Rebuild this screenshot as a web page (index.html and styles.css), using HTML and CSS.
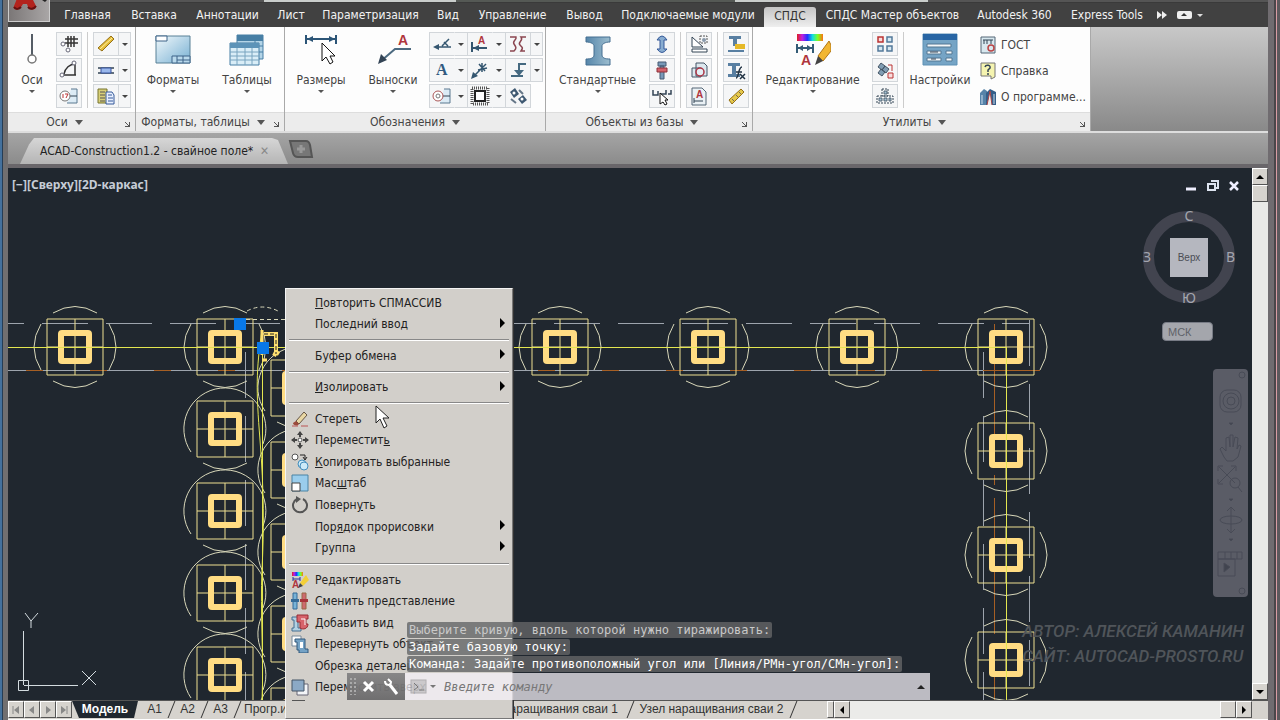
FILE: index.html
```
<!DOCTYPE html>
<html lang="ru">
<head>
    <meta charset="utf-8">
    <title>ACAD-Construction1.2 - свайное поле</title>
    <link rel="stylesheet" href="styles.css">
</head>
<body>
    <div class="app">
        <header class="titlebar">
            <span class="strip dark"></span>
            <span class="strip light"></span>
            <span class="strip mid"></span>
            <span class="strip light"></span>
        </header>

        <nav class="tabs">
            <button class="app-button" aria-label="Меню приложения">
                <svg width="42" height="21" viewBox="0 0 42 21"><path d="M5 6 9-4h13l5 10c1 4-6 5-8 1l-1-3h-4l-2 3c-2 4-9 3-7-1z" fill="#b3231d"/><path d="M5 7c2 3 5 2 7 0M19 7c2 3 6 2 8-1" stroke="#641010" stroke-width="2" fill="none"/><path d="M33 0h5l-2 2z" fill="#222"/></svg>
            </button>
            <a href="#">Главная</a>
            <a href="#">Вставка</a>
            <a href="#">Аннотации</a>
            <a href="#">Лист</a>
            <a href="#">Параметризация</a>
            <a href="#">Вид</a>
            <a href="#">Управление</a>
            <a href="#">Вывод</a>
            <a href="#">Подключаемые модули</a>
            <a href="#" class="active">СПДС</a>
            <a href="#">СПДС Мастер объектов</a>
            <a href="#">Autodesk 360</a>
            <a href="#">Express Tools</a>
            <svg class="tabs-more" width="50" height="12" viewBox="0 0 50 12"><path d="M4 2l5 4-5 4zM9 2l5 4-5 4z" fill="#eee"/><rect x="24" y="2" width="15" height="8" rx="2" fill="#eee"/><path d="M28 7l3-3 3 3z" fill="#333"/><path d="M44 5h6l-3 3z" fill="#ddd"/></svg>
        </nav>

        <section class="ribbon">
            <div class="panel p-axes">
                <div class="panel-body">
                    <button class="big">
                        <svg width="34" height="34"><path d="M17 2v22" stroke="#555d66" stroke-width="2"/><circle cx="17" cy="27" r="4" fill="#fff" stroke="#777" stroke-width="1.5"/></svg>
                        <span>Оси</span><i class="arrow"></i>
                    </button>
                    <div class="tools">
                        <button class="tool"><svg width="20" height="20"><path d="M6 5h13M6 9h13M9 2v11M12 2v11M15 2v11" stroke="#333" stroke-width="1.5"/><circle cx="4" cy="10" r="2" fill="#fff" stroke="#667"/><circle cx="9" cy="16" r="2" fill="#fff" stroke="#667"/></svg></button>
                        <button class="tool"><svg width="20" height="20"><path d="M4 15h13M16 4v11M5 14C6 8 11 4 16 4" stroke="#333" stroke-width="1.5" fill="none"/><circle cx="3" cy="15" r="2" fill="#fff" stroke="#667"/><circle cx="15" cy="3" r="2" fill="#fff" stroke="#667"/></svg></button>
                        <button class="tool"><svg width="20" height="20"><path d="M12 3h6v14H8" fill="#dcebf5" stroke="#5b7890"/><path d="M10 10h8" stroke="#345"/><circle cx="6" cy="10" r="5" fill="#fff" stroke="#777"/><path d="M4 8v4M6 8h3l-2 4" stroke="#b33" fill="none"/></svg></button>
                    </div>
                    <span class="divider"></span>
                    <div class="tools">
                        <div class="split"><button class="tool"><svg width="20" height="20"><path d="M2 14 15 2l3 3L6 17z" fill="#e5bd3b" stroke="#957017"/><path d="M4 15 16 4" stroke="#fff3a3"/></svg></button><button class="drop"></button></div>
                        <div class="split"><button class="tool"><svg width="20" height="20"><path d="M2 8h16M2 13h16" stroke="#345" stroke-width="1.5"/><path d="M5 8h10v5H5z" fill="#9ab8ec" stroke="#3955a0"/></svg></button><button class="drop"></button></div>
                        <div class="split"><button class="tool"><svg width="20" height="20"><path d="M2 3h9v14H2z" fill="#d9d078" stroke="#77742e"/><path d="M4 6h5M4 9h5M4 12h5M4 15h5" stroke="#555"/><path d="M10 6h6l2 3v9h-8z" fill="#e8f0ff" stroke="#345999"/><path d="M12 9h4M12 12h5M12 15h5" stroke="#345999"/></svg></button><button class="drop"></button></div>
                    </div>
                </div>
                <footer><span>Оси</span><i class="arrow wide"></i><i class="launcher"></i></footer>
            </div>

            <div class="panel p-formats">
                <div class="panel-body">
                    <button class="big">
                        <svg width="36" height="34"><defs><linearGradient id="sheet" x2="1" y2="1"><stop stop-color="#f1f8fb"/><stop offset="1" stop-color="#77b0d3"/></linearGradient></defs><path d="M1 4h34v27H1z" fill="url(#sheet)" stroke="#588096"/><path d="M1 4h11v5H1z" fill="#fff" stroke="#3c6388"/><path d="M17 24h18v7H17zM22 24v7M28 24v7M22 28h13" fill="#b9d9ec" stroke="#3c6388"/></svg>
                        <span>Форматы</span><i class="arrow"></i>
                    </button>
                    <button class="big">
                        <svg width="36" height="34"><path d="M8 3h26v24H8z" fill="#b3d4e7" stroke="#477fa5"/><path d="M8 3h26v6H8z" fill="#477fa5"/><path d="M8 14h26M8 20h26M26 9v18" stroke="#477fa5"/><path d="M1 11h29v22H1z" fill="#d9edf7" stroke="#477fa5"/><path d="M1 11h29v5H1z" fill="#5c93b8"/><path d="M1 20h29M1 24h29M1 28h29M8 16v17M16 16v17M23 16v17" stroke="#79a4bf"/></svg>
                        <span>Таблицы</span><i class="arrow"></i>
                    </button>
                </div>
                <footer><span>Форматы, таблицы</span><i class="arrow wide"></i><i class="launcher"></i></footer>
            </div>

            <div class="panel p-marks">
                <div class="panel-body">
                    <button class="big">
                        <svg width="36" height="34"><path d="M3 3v9M33 3v9M3 7h30" stroke="#2c5577" stroke-width="2"/><path d="M4 7l6-3v6zM32 7l-6-3v6z" fill="#2c5577"/><path d="M19 11v18l4-4 4 7 3-2-3-6h5z" fill="#fff" stroke="#111"/></svg>
                        <span>Размеры</span><i class="arrow"></i>
                    </button>
                    <button class="big">
                        <svg width="36" height="34"><text x="23" y="13" class="glyph red">A</text><path d="M36 17H20L6 29" stroke="#4c6a80" stroke-width="2" fill="none"/><path d="M3 32l3-10 6 6z" fill="#345"/></svg>
                        <span>Выноски</span><i class="arrow"></i>
                    </button>
                    <div class="tools">
                        <div class="split plain"><button class="tool"><svg width="20" height="20"><path d="M4 13h15M10 12l7-7M12 8l4 4" stroke="#345670" stroke-width="1.5"/><path d="M1 13l6-3v6z" fill="#345670"/></svg></button><button class="drop"></button></div>
                        <div class="split plain"><button class="tool"><svg width="20" height="20"><text x="5" y="12" class="glyph-sm blue">A</text></svg></button><button class="drop"></button></div>
                        <div class="split plain"><button class="tool"><svg width="20" height="20"><path d="M12 3h6v14H8" fill="#dcebf5" stroke="#5b7890"/><path d="M10 10h8" stroke="#345"/><circle cx="6" cy="10" r="5" fill="#fff" stroke="#a55"/><circle cx="6" cy="10" r="2" fill="none" stroke="#777"/></svg></button><button class="drop"></button></div>
                    </div>
                    <div class="tools">
                        <div class="split plain"><button class="tool"><svg width="20" height="20"><path d="M2 8v10M3 14h14" stroke="#345670" stroke-width="2"/><path d="M3 14l6-3v6z" fill="#345670"/><text x="8" y="10" class="glyph-xs red">A</text></svg></button><button class="drop"></button></div>
                        <div class="split plain"><button class="tool"><svg width="20" height="20"><path d="M3 17 16 4M9 4l6 7M8 10l9-2M12 3v9" stroke="#345670" stroke-width="1.5"/><path d="M1 19l2-7 5 4z" fill="#345670"/></svg></button><button class="drop"></button></div>
                        <div class="split plain"><button class="tool"><svg width="20" height="20"><path d="M2 2h16v16H2z" fill="none" stroke="#555" stroke-width="3" stroke-dasharray="1 1"/><path d="M5 5h10v10H5z" fill="#fff" stroke="#222" stroke-width="2"/></svg></button><button class="drop"></button></div>
                    </div>
                    <div class="tools">
                        <div class="split"><button class="tool"><svg width="20" height="20"><path d="M2 3h6c1 3-4 4-2 7s3 4 0 7H2M18 3h-5c3 4-4 5-1 8s3 3 1 6h4" stroke="#8b4650" stroke-width="1.5" fill="none"/></svg></button><button class="drop"></button></div>
                        <div class="split"><button class="tool"><svg width="20" height="20"><path d="M18 4h-7v12M3 16h12" stroke="#456980" stroke-width="2" fill="none"/><path d="M6 10h10l-5 6z" fill="#456980"/></svg></button><button class="drop"></button></div>
                        <button class="tool"><svg width="20" height="20"><path d="M2 6l5-4 4 6-5 4zM10 13l5-4 4 5-5 4z" fill="#3e5871"/><circle cx="6" cy="7" r="1.5" fill="#fff"/><circle cx="14" cy="13" r="1.5" fill="#fff"/><path d="M11 4l4 4M3 13l5 4" stroke="#678" stroke-width="2"/></svg></button>
                    </div>
                </div>
                <footer><span>Обозначения</span><i class="arrow wide"></i></footer>
            </div>

            <div class="panel p-objects">
                <div class="panel-body">
                    <button class="big">
                        <svg width="36" height="34"><defs><linearGradient id="steel"><stop stop-color="#5686aa"/><stop offset="1" stop-color="#9cbdcf"/></linearGradient></defs><path d="M6 5h24v5c-5 0-8 2-8 4v9c0 3 3 4 8 4v6H6v-6c5 0 8-1 8-4v-9c0-2-3-4-8-4z" fill="url(#steel)" stroke="#456f91"/></svg>
                        <span>Стандартные</span><i class="arrow"></i>
                    </button>
                    <div class="tools">
                        <button class="tool"><svg width="20" height="20"><path d="M5 6q5-8 10 0h-3v9h3q-5 7-10 0h3V6z" fill="#88acd0" stroke="#345999"/></svg></button>
                        <button class="tool"><svg width="20" height="20"><path d="M6 2h8v4H6zM8 6h4v13H8z" fill="#7899b8" stroke="#475b73"/><path d="M5 8h10v4H5z" fill="#d4636c" stroke="#8c3038"/></svg></button>
                        <button class="tool"><svg width="20" height="20"><path d="M1 4v5h5V5M8 8h6V4M16 8h3V4" stroke="#345" stroke-width="1.5" fill="none"/><path d="M8 7v11l3-2 2 3 2-1-2-4h3z" fill="#fff" stroke="#111"/></svg></button>
                    </div>
                    <span class="divider"></span>
                    <div class="tools">
                        <button class="tool"><svg width="20" height="20"><path d="M3 3l11 10H3zM3 15h15v3H3z" fill="#fff" stroke="#345"/><path d="M11 2h7v7h-7z" fill="none" stroke="#555" stroke-dasharray="2 1"/><circle cx="15" cy="6" r="2" fill="#89a"/></svg></button>
                        <button class="tool"><svg width="20" height="20"><path d="M3 8h9v9H3zM7 3h8l3 3v10H7z" fill="#dce8ef" stroke="#456"/><circle cx="11" cy="12" r="4" fill="#e4eef4" stroke="#a34" stroke-width="1.5"/></svg></button>
                        <button class="tool"><svg width="20" height="20"><path d="M3 2h10l4 4v13H3z" fill="#eaf1f5" stroke="#567"/><path d="M5 15h9M5 12v5" stroke="#345"/><text x="7" y="12" class="glyph-xs red">A</text></svg></button>
                    </div>
                    <span class="divider"></span>
                    <div class="tools">
                        <button class="tool"><svg width="20" height="20"><path d="M3 2h12v3h-4v7H7V5H3z" fill="#587fa2"/><path d="M9 10h10v5H9z" fill="#e5b928"/><path d="M2 16h16v2H2z" fill="#587fa2"/></svg></button>
                        <button class="tool"><svg width="20" height="20"><path d="M2 3h12v3h-4v8h4v3H2v-3h4V6H2z" fill="#587fa2"/><path d="M16 7c-4 0-3 11-6 11M10 12h6M14 14l5 5M19 14l-5 5" stroke="#234" stroke-width="1.5" fill="none"/></svg></button>
                        <button class="tool"><svg width="20" height="20"><path d="M3 14 15 3l3 3L6 18z" fill="#e5c94b" stroke="#957017"/><path d="M6 13l2 2M10 9l2 2M13 6l2 2" stroke="#765"/></svg></button>
                    </div>
                </div>
                <footer><span>Объекты из базы</span><i class="arrow wide"></i><i class="launcher"></i></footer>
            </div>

            <div class="panel p-utils">
                <div class="panel-body">
                    <button class="big">
                        <svg width="36" height="34"><defs><linearGradient id="rainbow"><stop stop-color="#e02020"/><stop offset=".2" stop-color="#c020e0"/><stop offset=".4" stop-color="#2030ff"/><stop offset=".6" stop-color="#10e0e0"/><stop offset=".8" stop-color="#80ff20"/><stop offset="1" stop-color="#ff7010"/></linearGradient></defs><path d="M2 2h26v7H2z" fill="url(#rainbow)"/><path d="M2 12v9M18 12v9M3 16h15" stroke="#345c76" stroke-width="2"/><path d="M3 16l5-3v6zM17 16l-5-3v6z" fill="#345c76"/><text x="6" y="33" class="glyph red">A</text><path d="M23 24 34 9l2 4v6l-8 10z" fill="#f2b632" stroke="#b27615"/><path d="M23 24l5 5-8 4z" fill="#444"/></svg>
                        <span>Редактирование</span><i class="arrow"></i>
                    </button>
                    <div class="tools">
                        <button class="tool"><svg width="20" height="20"><path d="M3 3h5v5H3z" fill="#f7dddd" stroke="#b33" stroke-width="1.5"/><path d="M12 3h5v5h-5zM3 12h5v5H3zM12 12h5v5h-5z" fill="#d7e8f2" stroke="#53799a" stroke-width="1.5"/></svg></button>
                        <button class="tool"><svg width="20" height="20"><path d="M6 3l4 3-3 4-4-3zM10 6l4 3-3 4-4-3zM6 9l4 3-3 4-4-3z" fill="#809db3" stroke="#456"/><path d="M13 5h4v6" stroke="#b33" fill="none"/><path d="M13 13h5v5h-5z" fill="#f7dddd" stroke="#b33"/></svg></button>
                        <button class="tool"><svg width="20" height="20"><path d="M2 10h16v7H2zM7 3h6v7H7z" fill="none" stroke="#345" stroke-dasharray="2 1"/><path d="M4 12h3v3H4zM9 12h3v3H9zM14 12h2v3h-2zM9 5h3v3H9z" fill="#a4c1d2" stroke="#567"/></svg></button>
                    </div>
                    <span class="divider"></span>
                    <button class="big settings">
                        <svg width="36" height="34"><path d="M1 2h34v31H1z" fill="#75a4c5" stroke="#5f91b4"/><path d="M1 2h34v6H1z" fill="#2865a4"/><path d="M5 12h24v3H5zM5 19h14v3H5zM24 19h6v3h-6zM5 26h14v3H5zM24 26h6v3h-6z" fill="#f4f7f8" stroke="#527792"/><path d="M8 20h8M9 27h5" stroke="#345"/></svg>
                        <span>Настройки</span>
                    </button>
                    <div class="links">
                        <button><svg width="18" height="18"><path d="M2 1h14v16H2z" fill="#d8e8ef" stroke="#567"/><path d="M4 4h10M5 4v4M8 4v4M12 4v4" stroke="#345"/><circle cx="12" cy="12" r="3" fill="none" stroke="#b44" stroke-width="1.5"/></svg>ГОСТ</button>
                        <button><svg width="18" height="18"><path d="M2 1h14v14l-4 2v-3H2z" fill="#f5f4b0" stroke="#777"/><path d="M6 5c1-3 6-2 5 1l-2 2v2M9 11v2" stroke="#345" stroke-width="1.5" fill="none"/></svg>Справка</button>
                        <button><svg width="18" height="18"><path d="M1 5l4-4 3 2v14H1z" fill="#5683a9"/><path d="M7 5l4-4 6 3v13H7z" fill="#345e89"/><path d="M8 17l3-14 2 14" fill="#eee" stroke="#a44"/><path d="M3 7v9M15 6v10" stroke="#cde"/></svg>О программе...</button>
                    </div>
                </div>
                <footer><span>Утилиты</span><i class="arrow wide"></i><i class="launcher"></i></footer>
            </div>
        </section>

        <div class="doc-tabs">
            <div class="doc-tab"><span>ACAD-Construction1.2 - свайное поле*</span><button aria-label="Закрыть">✕</button></div>
            <button class="new-tab" aria-label="Новая вкладка"><svg width="26" height="20" viewBox="0 0 26 20"><path d="M2 2h16q3 0 4 4l2 12H10q-4 0-5-4z" fill="#777" stroke="#555" stroke-width="2"/><path d="M13 6v8M9 10h8" stroke="#999" stroke-width="3"/></svg></button>
        </div>

        <main class="workspace">
            <div class="canvas">
                <svg class="drawing" width="100%" height="100%">
                    <defs>
                        <g id="core">
                            <path d="M-28-28h56v56h-56zM0-28v56M-28 0h56" fill="none" stroke="#eee092"/>
                            <rect x="-14" y="-14" width="28" height="28" rx="1" fill="none" stroke="#ffdc83" stroke-width="6"/>
                        </g>
                        <g id="pile">
                            <use href="#core"/>
                            <path class="arc" d="M-22-34Q0-47 22-34M-22 34Q0 47 22 34M-34-23Q-48 0-34 23M34-23Q48 0 34 23"/>
                        </g>
                        <g id="chain">
                            <use href="#core"/>
                            <path class="arc" d="M-34 23A41 41 0 1 1 38 15M-22 34Q0 47 22 34"/>
                        </g>
                    </defs>
                    <!-- origin of the drawing is the window corner -->
                    <g transform="translate(-8 -168)">
                        <g class="guides">
                            <path d="M-22 323.500H1030" stroke-dasharray="46 18"/>
                            <path d="M8 370.500H983"/>
                            <path class="orange" d="M26 370.500H983" stroke-dasharray="17 47"/>
                            <path d="M983.500 352V700M245.500 352V700" stroke-dasharray="46 18"/>
                            <path d="M1029.500 320V700" stroke-dasharray="46 18"/>
                            <path class="orange" d="M983 370.500h57M994.500 324V700" stroke-dasharray="136 15 10 13"/>
                        </g>
                        <use href="#pile" x="75" y="347"/>
                        <use href="#pile" x="225" y="347"/>
                        <use href="#pile" x="560" y="347"/>
                        <use href="#pile" x="708" y="347"/>
                        <use href="#pile" x="857" y="347"/>
                        <use href="#pile" x="1006" y="347"/>
                        <use href="#pile" x="1006" y="451"/>
                        <use href="#pile" x="1006" y="555"/>
                        <use href="#pile" x="1006" y="660"/>
                        <use href="#chain" x="225" y="429"/>
                        <use href="#chain" x="225" y="511"/>
                        <use href="#chain" x="225" y="593"/>
                        <use href="#chain" x="225" y="675"/>
                        <use href="#chain" x="299" y="388"/>
                        <use href="#chain" x="299" y="470"/>
                        <use href="#chain" x="299" y="552"/>
                        <use href="#chain" x="299" y="634"/>
                        <use href="#chain" x="299" y="716"/>
                        <path class="axis" d="M8 347.500H1006M1006.500 347V700M262.500 347V700"/>
                        <path class="axis" d="M262 330c-6 40-6 60-2 110s4 90 2 130 2 90 0 130"/>
                        <path d="M247 311q15-8 31 0M246 319.500h40" class="arc" stroke-dasharray="4 3"/>
                        <path d="M264 334h12v18l3 2-3-2-2 4" stroke="#ffe070" stroke-width="4" fill="none"/>
                        <path d="M264 334h12v20" stroke="#222" fill="none" stroke-dasharray="4 2"/>
                        <path d="M262 360h5M262 330v25" stroke="#ffe070" stroke-width="3"/>
                        <path d="M234 318h12v12h-12zM257 342h12v12h-12z" fill="#0878e8"/>
                        <g class="ucs">
                            <path d="M23.500 631v54M24 685.500h54M18.500 680.500h10v10h-10zM25 613l6 8 7-8M31 621v7M82 671l14 14M96 671l-14 14"/>
                        </g>
                    </g>
                </svg>

                <div class="view-label">[−][Сверху][2D-каркас]</div>
                <div class="watermark"><p>АВТОР: АЛЕКСЕЙ КАМАНИН</p><p>САЙТ: AUTOCAD-PROSTO.RU</p></div>

                <div class="window-buttons">
                    <svg width="56" height="12"><path d="M1 9h10" stroke="#eef" stroke-width="3"/><path d="M26 1h7v7h-3M23 4h7v6h-7z" fill="none" stroke="#dde4f0" stroke-width="2"/><path d="M45 2l8 8M53 2l-8 8" stroke="#eef" stroke-width="2.500"/></svg>
                </div>

                <div class="viewcube">
                    <span class="north">С</span><span class="west">З</span>
                    <button>Верх</button>
                    <span class="east">В</span><span class="south">Ю</span>
                </div>
                <button class="ucs-name">МСК</button>

                <div class="navbar">
                    <svg width="35" height="228" fill="none" stroke="#484b56">
                        <circle cx="29" cy="6" r="3"/><circle cx="29" cy="222" r="3"/>
                        <rect x="7" y="21" width="21" height="22" rx="7"/><circle cx="18" cy="32" r="8"/><circle cx="18" cy="32" r="4"/>
                        <path d="M16 54h4l-2 2zM16 130h4l-2 2zM16 170h4l-2 2z" fill="#41444f"/>
                        <path d="M11 88 7 80l2-2 4 4V69l3-1 1 10V66h3v12l2-10 3 1-1 11 2-4 2 1-3 11-5 4h-6z"/>
                        <path d="M6 98l16 16M22 98 6 114M5 102v-5h5M18 97h5v5M5 110v5h5"/><circle cx="22" cy="114" r="5"/><path d="M25 118l4 5"/>
                        <path d="M18 138v26M14 142l4-4 4 4M14 160l4 4 4-4"/><ellipse cx="18" cy="151" rx="11" ry="4"/>
                        <path d="M5 183h24v7H5zM5 190h17v17H5zM12 183v7M18 183v7M24 183v7"/><path d="M11 194v9l6-5z" fill="#41444f"/>
                    </svg>
                </div>
            </div>
            <div class="vscroll">
                <button class="sb up" aria-label="Вверх"></button>
                <span class="thumb"></span>
                <button class="sb down" aria-label="Вниз"></button>
            </div>
        </main>

        <footer class="layouts">
            <button class="nav-btn" aria-label="Первый"><svg width="10" height="10"><path d="M2 1v8" stroke="#888"/><path d="M8 1v8L3 5z" fill="#888"/></svg></button>
            <button class="nav-btn" aria-label="Назад"><svg width="10" height="10"><path d="M7 1v8L2 5z" fill="#888"/></svg></button>
            <button class="nav-btn" aria-label="Вперёд"><svg width="10" height="10"><path d="M3 1v8l5-4z" fill="#888"/></svg></button>
            <button class="nav-btn" aria-label="Последний"><svg width="10" height="10"><path d="M2 1v8l5-4z" fill="#888"/><path d="M8 1v8" stroke="#888"/></svg></button>
            <div class="layout-tabs">
                <a href="#" class="current">Модель</a>
                <a href="#">А1</a>
                <a href="#">А2</a>
                <a href="#">А3</a>
                <a href="#" class="program">Прогр.и</a>
                <a href="#" class="joint">Узел наращивания сваи 1</a>
                <a href="#" class="joint">Узел наращивания сваи 2</a>
            </div>
            <span class="grip"></span>
            <button class="sb left" aria-label="Влево"></button>
            <div class="htrack"><span class="thumb"></span></div>
            <button class="sb right" aria-label="Вправо"></button>
            <span class="corner"></span>
        </footer>

        <div class="menu" role="menu">
            <div class="menu-list">
                <button><span><u>П</u>овторить СПМАССИВ</span></button>
                <button class="sub"><span>Последний ввод</span></button>
                <hr>
                <button class="sub"><span>Буфер обмена</span></button>
                <hr>
                <button class="sub"><span><u>И</u>золировать</span></button>
                <hr>
                <button><svg width="18" height="18"><path d="M5 11l8-9 3 3-8 9z" fill="#e8d6a3" stroke="#654"/><path d="M5 11l3 3c-2 3-6 1-6-1z" fill="#9b4b3c"/><path d="M1 16h6M10 16h7" stroke="#b55"/></svg><span>Стереть</span></button>
                <button><svg width="18" height="18"><path d="M9 1v5M9 12v5M1 9h5M12 9h5" stroke="#444" stroke-width="2"/><path d="M6 4l3-4 3 4zM6 14l3 4 3-4zM4 6L0 9l4 3zM14 6l4 3-4 3z" fill="#444"/><circle cx="9" cy="9" r="2" fill="#fff" stroke="#555"/></svg><span>Переместит<u>ь</u></span></button>
                <button><svg width="18" height="18"><circle cx="4" cy="4" r="3" fill="#fff" stroke="#555"/><path d="M9 2h5v4M12 4l2 3 2-3" stroke="#222" fill="none"/><circle cx="11" cy="11" r="4" fill="#cceaf8" stroke="#438dbc"/><circle cx="13" cy="13" r="4" fill="#cceaf8" stroke="#438dbc"/></svg><span><u>К</u>опировать выбранные</span></button>
                <button><svg width="18" height="18"><path d="M1 1h16v16H1z" fill="#9acdec" stroke="#4b83a4"/><path d="M1 9h8v8H1z" fill="#fff" stroke="#444"/></svg><span>Мас<u>ш</u>таб</span></button>
                <button><svg width="18" height="18"><path d="M6 3a7 7 0 1 0 6 0" fill="none" stroke="#555" stroke-width="2"/><path d="M5 0l5 3-5 4z" fill="#555"/></svg><span>Поверн<u>у</u>ть</span></button>
                <button class="sub"><span>Пор<u>я</u>док прорисовки</span></button>
                <button class="sub"><span>Группа</span></button>
                <hr>
                <button><svg width="18" height="18"><path d="M1 1h11v4H1z" fill="url(#rainbow)"/><path d="M2 8h7M2 6v4M9 6v4" stroke="#239"/><text x="1" y="17" class="glyph-xs red">A</text><path d="M9 12l6-8 3 5-6 6z" fill="#f3cf38"/><path d="M9 12l3 3-5 2z" fill="#444"/></svg><span>Редактировать</span></button>
                <button><svg width="18" height="18"><path d="M2 1h4v16H2z" fill="#79b3d7" stroke="#356b98"/><path d="M11 1h4v16h-4z" fill="#cd6a70" stroke="#964"/><path d="M0 7h8v3H0z" fill="#356b98"/><path d="M9 7h8v3H9z" fill="#a8343c"/></svg><span>Сменить представление</span></button>
                <button><svg width="18" height="18"><path d="M1 3h9v3H7v8h3v3H1v-3h2V6H1z" fill="#b3d1e3" stroke="#456f91"/><path d="M6 1h11v4h-2v5h2c0 5-5 6-8 4V8H6z" fill="#d6636b" stroke="#982c34"/><path d="M10 5h4v6" stroke="#fff" fill="none"/></svg><span>Добавить вид</span></button>
                <button><svg width="18" height="18"><path d="M1 1h9v4H8v6H1z" fill="#fff" stroke="#789"/><path d="M4 4h10v10h3v4H8v-3H6V7H4z" fill="#74a2c5" stroke="#31587c"/><path d="M9 7h3v6H9z" fill="#fff"/></svg><span>Перевернуть объект</span></button>
                <button><span>Обрезка деталей</span></button>
                <button><svg width="18" height="18"><path d="M6 6h11v11H6z" fill="#f3f5f8" stroke="#667"/><path d="M1 2h12v11H1z" fill="#8ba9c6" stroke="#456"/></svg><span>Переместить вверх</span></button>
            </div>
            <span class="next-icon"></span>
        </div>

        <svg class="pointer" width="16" height="26"><path d="M1 1v17l4-4 4 9 3-2-4-8h6z" fill="#fff" stroke="#222"/></svg>

        <div class="command">
            <p class="old">Выберите кривую, вдоль которой нужно тиражировать:</p>
            <p>Задайте базовую точку:</p>
            <p>Команда: Задайте противоположный угол или [Линия/РМн-угол/СМн-угол]:</p>
            <div class="command-line">
                <div class="handles"><svg width="58" height="26"><path d="M4 5v17M8 5v17" stroke="#aaa" stroke-width="2" stroke-dasharray="2 2"/><path d="M17 9l9 9M26 9l-9 9" stroke="#fff" stroke-width="3"/><path d="M43 12l7 9" stroke="#fff" stroke-width="3"/><path d="M38 8c0 5 6 5 6 1l-3-3" stroke="#fff" stroke-width="2" fill="none"/></svg></div>
                <svg class="prompt" width="30" height="16"><rect x="5" y="1" width="15" height="13" fill="#aaa" opacity=".5" stroke="#777"/><path d="M8 4l4 4-4 3M13 11h5" stroke="#777" fill="none"/><path d="M24 6h6l-3 3z" fill="#777"/></svg>
                <input type="text" placeholder="Введите команду" aria-label="Команда">
                <i class="history-arrow"></i>
            </div>
        </div>
    </div>
</body>
</html>
```
FILE: styles.css
```
* {
    box-sizing: border-box;
}

body {
    margin: 0;
    background: #69656a;
    font-family: "DejaVu Sans Condensed", "DejaVu Sans", sans-serif;
    font-size: 12px;
    color: #333;
}

button {
    margin: 0;
    padding: 0;
    border: 0;
    background: none;
    font: inherit;
    color: inherit;
}

a {
    color: inherit;
    text-decoration: none;
}

p {
    margin: 0;
}

svg {
    display: block;
    flex: none;
}

.app {
    position: relative;
    display: flex;
    flex-direction: column;
    height: 100vh;
    min-height: 600px;
    overflow: hidden;
    padding: 0 12px 0 8px;
    background: linear-gradient(90deg, #44719d 2px, #263d55 2px, #263d55 3px, #716f70 3px, #716f70 8px, transparent 8px),
        linear-gradient(270deg, #5d595d 3px, #d99da4 3px, #d99da4 4px, #4a464a 4px, #4a464a 6px, #706c70 6px);
}

/* title strip and tabs */

.titlebar {
    display: grid;
    grid-template-columns: 256px 192px 279px 193px 1fr;
    height: 3px;
    background: #555;
    border-bottom: 1px solid #3a3a3a;
}

.strip.light {
    background: #c9cdcb;
}

.strip.mid {
    background: #555955;
}

.tabs {
    position: relative;
    display: grid;
    grid-template-columns: 46px 67px 66px 81px 46px 113px 42px 87px 57px 150px 54px 151px 93px 92px 1fr;
    align-items: center;
    height: 24px;
    background: #414141;
    color: #f2f2f2;
    text-align: center;
    white-space: nowrap;
}

.tabs a {
    line-height: 24px;
}

.tabs a.active {
    align-self: end;
    margin: 0 1px;
    height: 20px;
    line-height: 18px;
    border-radius: 3px 3px 0 0;
    background: linear-gradient(#c4c4c4, #eee);
    color: #333;
}

.app-button {
    position: absolute;
    left: 0;
    top: -3px;
    width: 42px;
    height: 22px;
    background: linear-gradient(90deg, #7b7777, #a9a6a6);
    border: 1px solid #ccc;
    border-top: 0;
    overflow: hidden;
}

.tabs a:nth-of-type(1) {
    grid-column: 2;
}

/* ribbon */

.ribbon {
    display: flex;
    height: 106px;
    background: linear-gradient(#c8c8c8, #898989);
    border-bottom: 2px solid #ddd;
}

.panel {
    flex: none;
    display: flex;
    flex-direction: column;
    border-right: 1px solid #a9a9a9;
    background: #fdfdfd;
}

.p-axes { width: 128px; }
.p-formats { width: 149px; }
.p-marks { width: 261px; }
.p-objects { width: 207px; }
.p-utils { width: 338px; }

.panel-body {
    display: flex;
    flex: 1;
    padding-top: 5px;
}

.panel footer {
    position: relative;
    display: flex;
    align-items: center;
    justify-content: center;
    gap: 7px;
    height: 19px;
    border-top: 1px solid #ddd;
    background: #ececec;
    color: #444;
}

.p-axes footer,
.p-formats footer,
.p-objects footer,
.p-utils footer {
    padding-right: 14px;
}

.arrow {
    border: 3px solid transparent;
    border-top-color: #555;
    border-bottom: 0;
}

.arrow.wide {
    border-width: 5px 4px 0;
}

.launcher {
    position: absolute;
    right: 5px;
    bottom: 4px;
    width: 5px;
    height: 5px;
    border: solid #555;
    border-width: 0 1px 1px 0;
    background: linear-gradient(to top right, transparent 40%, #555 40%, #555 60%, transparent 60%);
}

.big {
    display: flex;
    flex-direction: column;
    align-items: center;
    width: 72px;
    white-space: nowrap;
    color: #444;
}

.big span {
    margin-top: 6px;
    line-height: 16px;
}

.big .arrow {
    margin-top: 2px;
}

.p-axes .big { width: 48px; }
.p-formats .big { width: 74px; }
.p-marks .big { width: 72px; }
.p-objects .big { width: 103px; }
.p-utils .big { width: 119px; }
.p-utils .settings { width: 72px; }

.tools {
    display: grid;
    grid-template-rows: repeat(3, 24px);
    align-content: start;
    gap: 2px;
}

.tool {
    display: flex;
    align-items: center;
    justify-content: center;
    width: 26px;
    height: 24px;
    border: 1px solid #d2d6da;
    background: #f5f6f7;
}

.split {
    display: flex;
}

.split.plain .tool {
    border-right-color: #f5f6f7;
}

.split.plain .drop {
    border-right: 0;
}

.drop {
    width: 12px;
    border: 1px solid #d2d6da;
    border-left: 0;
    background: #f5f6f7;
}

.drop::before {
    content: '';
    display: block;
    margin: 0 auto;
    width: 0;
    border: 3px solid transparent;
    border-top-color: #444;
    border-bottom: 0;
}

.divider {
    width: 1px;
    height: 76px;
    margin: 0 5px;
    background: #ccc;
}

.p-utils .divider {
    margin: 0 0 0 5px;
}

.links {
    display: flex;
    flex-direction: column;
    gap: 2px;
    padding-top: 1px;
}

.links button {
    display: flex;
    align-items: center;
    gap: 4px;
    height: 24px;
    margin-left: 3px;
    white-space: nowrap;
    color: #444;
}

.glyph, .glyph-sm, .glyph-xs {
    font-family: "Liberation Sans", sans-serif;
    font-weight: bold;
    font-size: 14px;
}

.glyph-sm {
    font-family: "Liberation Serif", serif;
    font-size: 16px;
    transform: translate(-1px, 3px);
}

.glyph-xs {
    font-size: 10px;
}

.red { fill: #b0363e; }
.blue { fill: #315a80; }

/* document tabs */

.doc-tabs {
    display: flex;
    align-items: flex-end;
    height: 35px;
    padding-left: 12px;
    border-bottom: 4px solid #69666a;
    background: linear-gradient(#a5a5a5, #8b8b8b);
}

.doc-tab {
    display: flex;
    align-items: center;
    width: 268px;
    height: 26px;
    padding: 0 19px 0 20px;
    clip-path: polygon(0 100%, 9px 25%, 14px 0, 252px 0, 258px 8%, 268px 100%);
    background: linear-gradient(#d6d6d6, #b5b5b5);
    color: #222;
    white-space: nowrap;
}

.doc-tab button {
    margin-left: auto;
    color: #888;
}

.new-tab {
    align-self: center;
}

/* drawing area */

.workspace {
    display: flex;
    flex: 1;
    min-height: 0;
}

.canvas {
    position: relative;
    flex: 1;
    overflow: hidden;
    background: #20272f;
}

.drawing {
    position: absolute;
    inset: 0;
}

.arc {
    fill: none;
    stroke: #d9d8ba;
}

.guides path {
    fill: none;
    stroke: #9da4ad;
}

.guides .orange {
    stroke: #a65f24;
}

.axis {
    fill: none;
    stroke: #e3e650;
}

.ucs path {
    fill: none;
    stroke: #d4dce0;
}

.view-label {
    position: absolute;
    left: 4px;
    top: 8px;
    font: bold 12px/18px "Noto Sans", sans-serif;
    color: #c6ccd6;
}

.watermark {
    position: absolute;
    right: 8px;
    bottom: 31px;
    font: italic 500 17px/25px "Roboto", sans-serif;
    color: #50555a;
    text-align: left;
}

.window-buttons {
    position: absolute;
    right: 11px;
    top: 12px;
}

.viewcube {
    position: absolute;
    right: 17px;
    top: 43px;
    display: grid;
    place-items: center;
    width: 92px;
    height: 92px;
    border: 11px solid #42444f;
    border-radius: 50%;
    font: 14px/14px "Noto Sans", sans-serif;
    color: #a3a5ae;
}

.viewcube button {
    width: 38px;
    height: 39px;
    background: #b5b7bf;
    color: #4b4d55;
    font: 10px "Liberation Sans", sans-serif;
}

.viewcube span {
    position: absolute;
}

.north { top: -13px; }
.south { bottom: -13px; }
.west { left: -11px; }
.east { right: -11px; }

.ucs-name {
    position: absolute;
    right: 39px;
    top: 154px;
    width: 51px;
    height: 19px;
    padding-left: 5px;
    border: 1px solid #777b85;
    border-radius: 4px;
    background: #a4a6ac;
    color: #5f6268;
    text-align: left;
    font: 11px "Liberation Sans", sans-serif;
}

.navbar {
    position: absolute;
    right: 4px;
    top: 201px;
    border-radius: 4px;
    background: #5a5c66;
}

/* scrollbars */

.vscroll {
    display: flex;
    flex-direction: column;
    width: 16px;
    background: #e9e9e7;
}

.sb, .thumb, .corner, .nav-btn {
    display: grid;
    place-items: center;
    flex: none;
    width: 16px;
    height: 17px;
    background: #d6d3ce;
    border: 1px solid;
    border-color: #fff #555 #555 #fff;
}

.sb::before {
    content: '';
    border: 4px solid transparent;
}

.up::before { border-bottom-color: #000; border-top: 0; }
.down::before { border-top-color: #000; border-bottom: 0; }
.left::before { border-right-color: #000; border-left: 0; }
.right::before { border-left-color: #000; border-right: 0; }

.vscroll .down {
    margin-top: auto;
}

.layouts {
    display: flex;
    align-items: center;
    height: 20px;
    padding-bottom: 1px;
    border-top: 1px solid #555;
    background: #d6d3ce;
    border-bottom: 1px solid #fff;
}

.layout-tabs {
    display: flex;
    flex: none;
    width: 755px;
    overflow: hidden;
    color: #333;
    font: 12px/17px "Liberation Sans", sans-serif;
}

.layout-tabs a {
    position: relative;
    width: 33px;
    text-align: center;
    white-space: nowrap;
}

.layout-tabs a::after {
    content: '';
    position: absolute;
    right: -1px;
    top: 0;
    width: 1px;
    height: 17px;
    background: #333;
    transform: skewX(-22deg);
}

.layout-tabs a.current {
    width: 66px;
    background: #20272f;
    clip-path: polygon(0 0, 100% 0, 62px 100%, 7px 100%);
    color: #fff;
    font-weight: bold;
}

.layout-tabs a.program {
    width: 225px;
    padding-left: 7px;
    text-align: left;
}

.layout-tabs a.joint {
    width: 168px;
}

.layout-tabs a.joint:last-child {
    width: 163px;
}

.grip {
    width: 7px;
    height: 17px;
    border: 1px solid;
    border-color: #fff #555 #555 #fff;
}

.htrack {
    display: flex;
    flex: 1;
    justify-content: flex-end;
    height: 18px;
    background: #ebebe9;
}

.corner {
    border: 0;
}

/* context menu */

.menu {
    position: absolute;
    left: 285px;
    top: 288px;
    bottom: 1px;
    width: 228px;
    padding-top: 3px;
    border: 1px solid;
    border-color: #f4f4f4 #777 #777 #f4f4f4;
    background: #d2cfca;
    box-shadow: 1px 0 #333;
}

.menu-list {
    display: flex;
    flex-direction: column;
    height: 406px;
}

.menu button {
    position: relative;
    display: grid;
    grid-template-columns: 24px 1fr;
    align-items: center;
    flex: 1;
    min-height: 0;
    padding-left: 5px;
    text-align: left;
    color: #222;
    line-height: 16px;
}

.menu button span {
    grid-column: 2;
    grid-row: 1;
}

.menu hr {
    flex: none;
    width: 220px;
    height: 2px;
    margin: 4px 3px;
    border: 0;
    border-top: 1px solid #888;
    border-bottom: 1px solid #fff;
}

.sub::after {
    content: '';
    position: absolute;
    right: 7px;
    top: 4px;
    border: 5px solid transparent;
    border-left-color: #000;
    border-right: 0;
}

.next-icon {
    display: block;
    width: 13px;
    height: 1px;
    margin: 2px 6px;
    background: #555;
}

.pointer {
    position: absolute;
    left: 375px;
    top: 405px;
}

/* command line */

.command {
    position: absolute;
    left: 347px;
    right: 350px;
    bottom: 20px;
}

.command p {
    width: fit-content;
    margin: 0 0 1px 60px;
    padding: 0 2px;
    border-radius: 2px;
    background: rgba(100, 101, 103, .8);
    color: #fff;
    font: 12px/16px "DejaVu Sans Mono", monospace;
    white-space: nowrap;
}

.command .old {
    color: #c9c9c9;
}

.command-line {
    display: flex;
    align-items: center;
    height: 27px;
    background: rgba(247, 243, 249, .73);
}

.handles {
    height: 27px;
    margin-right: 1px;
    background: linear-gradient(rgba(110, 110, 110, .8), rgba(80, 80, 80, .8));
}

.command-line input {
    flex: 1;
    min-width: 0;
    padding: 0 8px;
    border: 0;
    outline: 0;
    background: none;
    font: italic 12px "DejaVu Sans Mono", monospace;
}

.command-line input::placeholder {
    color: #777;
}

.history-arrow {
    margin-right: 5px;
    border: 4px solid transparent;
    border-top: 0;
    border-bottom-color: #222;
}
```
